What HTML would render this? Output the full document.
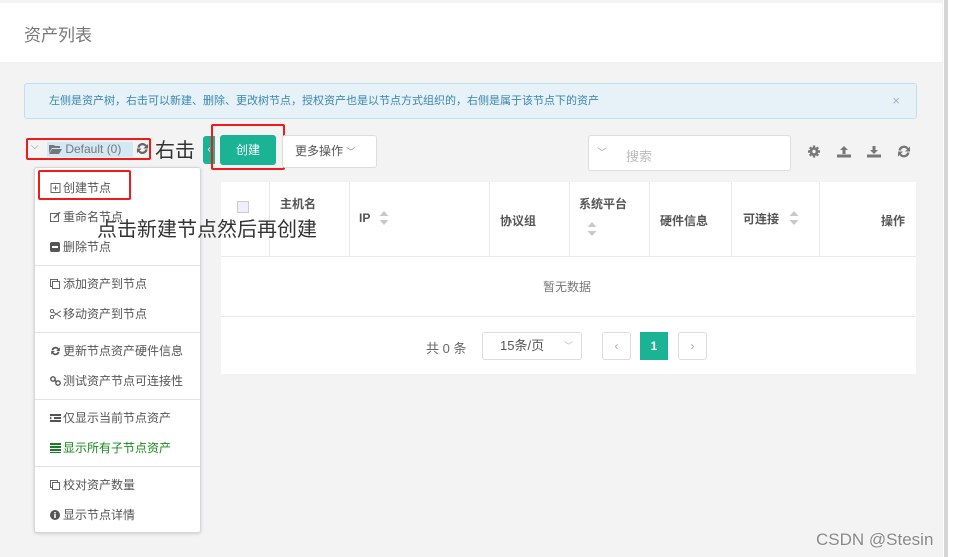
<!DOCTYPE html>
<html><head><meta charset="utf-8"><style>
*{box-sizing:border-box;margin:0;padding:0}
body{width:957px;height:557px;overflow:hidden;background:#f3f3f4;font-family:"Liberation Sans","Noto Sans CJK SC",sans-serif;position:relative;color:#676a6c;font-size:12px}
.a{position:absolute}
.sb{left:943px;top:0;width:14px;height:557px;background:#fff}
.sb:before{content:"";position:absolute;left:1px;top:0;width:4px;height:557px;background:#d6d6d6}
.hdr{left:0;top:3px;width:942px;height:59px;background:#fff}
.alert{left:24px;top:83px;width:893px;height:36px;background:#e6f1f8;border:1px solid #bfe1ec;border-radius:3px;color:#3a87ad;font-size:11px;line-height:34px;padding-left:24px}
.red{border:2px solid #f01a1a;border-radius:2px}
.btn{background:#fff;border:1px solid #ddd;border-radius:3px}
.menu{left:34px;top:167px;width:167px;height:366px;background:#fff;border:1px solid #d5d7db;border-radius:3px;box-shadow:0 1px 3px rgba(0,0,0,.15)}
.mi{position:absolute;left:15px;font-size:12px;color:#555}
.sep{position:absolute;left:0;width:165px;height:1px;background:#e2e3e6}
.ic{display:inline-block;width:11px;height:10px;margin-right:2px;vertical-align:-1px}
.srt{position:absolute}
</style></head><body>
<div class="a hdr"><div class="a" style="left:24px;top:18px;font-size:17px;color:#777">资产列表</div></div>
<div class="a sb"></div>
<div class="a alert">左侧是资产树，右击可以新建、删除、更改树节点，授权资产也是以节点方式组织的，右侧是属于该节点下的资产<span style="position:absolute;right:16px;color:#aac;font-size:13px">×</span></div>

<div class="a" style="left:31px;top:141px;font-size:10px;color:#888">⌵</div>
<div class="a" style="left:47px;top:142px;width:86px;height:15px;background:#d3e8f5"></div>
<div class="a" style="left:49px;top:142px;font-size:12px;color:#777"><svg width="13" height="10" viewBox="0 0 13 10" style="vertical-align:-1px"><path d="M0 1h5l1 1h5v2H3L0 9z M3 5h10l-3 5H0z" fill="#777"/></svg> Default (0)</div>
<svg class="a" style="left:136px;top:142px" width="13" height="13" viewBox="0 0 14 14"><g fill="#666"><path d="M1.5 6a5.5 5.5 0 0 1 10-2.5L13 2v5H8l2-2a3.3 3.3 0 0 0-6 1z M12.5 8a5.5 5.5 0 0 1-10 2.5L1 12V7h5l-2 2a3.3 3.3 0 0 0 6-1z"/></g></svg>
<div class="a red" style="left:26px;top:138px;width:125px;height:22px"></div>
<div class="a" style="left:155px;top:134px;font-size:20px;color:#333">右击</div>

<div class="a" style="left:203px;top:136px;width:12px;height:28px;background:#1ab394;border-radius:3px 0 0 3px;color:#fff;font-size:10px;line-height:28px;text-align:center">‹</div>
<div class="a" style="left:220px;top:135px;width:56px;height:30px;background:#1ab394;border-radius:3px;color:#fff;font-size:12px;line-height:30px;text-align:center">创建</div>
<div class="a red" style="left:211px;top:124px;width:74px;height:46px"></div>
<div class="a btn" style="left:282px;top:135px;width:95px;height:33px;line-height:31px;padding-left:12px;font-size:12px;color:#555">更多操作 <span style="color:#888;font-size:9px">﹀</span></div>

<div class="a btn" style="left:588px;top:135px;width:203px;height:36px"><span class="a" style="left:8px;top:8px;color:#999;font-size:10px">﹀</span><span class="a" style="left:37px;top:10px;color:#bbb;font-size:13px">搜索</span></div>
<svg class="a" style="left:808px;top:144px" width="105" height="15" viewBox="0 0 105 15">
<g fill="#777">
<circle cx="6" cy="7.5" r="4.3"/>
<g stroke="#777" stroke-width="2.4"><path d="M6 1.5v12M0 7.5h12M1.8 3.3l8.4 8.4M10.2 3.3l-8.4 8.4"/></g>
<circle cx="6" cy="7.5" r="1.7" fill="#f3f3f4"/>
<path d="M36 2l4 4h-2.5v4h-3V6H32z M29 10.5h14v3H29z"/>
<path d="M64.5 2h3v4H70l-4 4-4-4h2.5z M59 10.5h14v3H59z"/>
<path d="M90.5 6.5a5.5 5.5 0 0 1 10-2.5L102 2.5v5h-5l2-2a3.3 3.3 0 0 0-6 1z M101.5 8.5a5.5 5.5 0 0 1-10 2.5L90 12.5v-5h5l-2 2a3.3 3.3 0 0 0 6-1z"/></g></svg>

<div class="a" style="left:221px;top:182px;width:695px;height:192px;background:#fff"></div>
<div class="a" style="left:221px;top:256px;width:695px;height:1px;background:#e7eaec"></div>
<div class="a" style="left:221px;top:316px;width:695px;height:1px;background:#e7eaec"></div>
<div class="a" style="left:269px;top:182px;width:1px;height:74px;background:#e7eaec"></div>
<div class="a" style="left:349px;top:182px;width:1px;height:74px;background:#e7eaec"></div>
<div class="a" style="left:489px;top:182px;width:1px;height:74px;background:#e7eaec"></div>
<div class="a" style="left:569px;top:182px;width:1px;height:74px;background:#e7eaec"></div>
<div class="a" style="left:649px;top:182px;width:1px;height:74px;background:#e7eaec"></div>
<div class="a" style="left:731px;top:182px;width:1px;height:74px;background:#e7eaec"></div>
<div class="a" style="left:819px;top:182px;width:1px;height:74px;background:#e7eaec"></div>
<div class="a" style="left:237px;top:201px;width:12px;height:12px;border:1px solid #ccc;background:#eef"></div>
<div class="a" style="left:280px;top:195px;font-weight:bold;color:#555">主机名</div>
<div class="a" style="left:359px;top:211px;font-weight:bold;color:#555">IP</div>
<svg class="srt" style="left:379px;top:211px" width="10" height="14" viewBox="0 0 10 14"><path d="M5 0l4.5 5h-9zM5 14l4.5-5h-9z" fill="#c8c8c8"/></svg>
<div class="a" style="left:500px;top:212px;font-weight:bold;color:#555">协议组</div>
<div class="a" style="left:579px;top:195px;font-weight:bold;color:#555">系统平台</div>
<svg class="srt" style="left:587px;top:222px" width="10" height="14" viewBox="0 0 10 14"><path d="M5 0l4.5 5h-9zM5 14l4.5-5h-9z" fill="#c8c8c8"/></svg>
<div class="a" style="left:660px;top:212px;font-weight:bold;color:#555">硬件信息</div>
<div class="a" style="left:743px;top:210px;font-weight:bold;color:#555">可连接</div>
<svg class="srt" style="left:789px;top:211px" width="10" height="14" viewBox="0 0 10 14"><path d="M5 0l4.5 5h-9zM5 14l4.5-5h-9z" fill="#c8c8c8"/></svg>
<div class="a" style="left:881px;top:212px;font-weight:bold;color:#555">操作</div>
<div class="a" style="left:543px;top:278px;color:#777">暂无数据</div>
<div class="a" style="left:426px;top:338px;color:#666;font-size:13px">共 0 条</div>
<div class="a btn" style="left:482px;top:332px;width:100px;height:28px;line-height:26px;padding-left:17px;color:#555;font-size:13px">15条/页<span style="position:absolute;right:8px;color:#bbb;font-size:9px">﹀</span></div>
<div class="a btn" style="left:602px;top:332px;width:29px;height:28px;text-align:center;line-height:26px;color:#aaa">‹</div>
<div class="a" style="left:640px;top:332px;width:28px;height:28px;background:#1ab394;color:#fff;text-align:center;line-height:28px;font-weight:bold">1</div>
<div class="a btn" style="left:678px;top:332px;width:29px;height:28px;text-align:center;line-height:26px;color:#aaa">›</div>

<div class="a menu">
<div class="mi" style="top:11px"><svg class="ic" viewBox="0 0 11 10"><rect x="1" y="0.5" width="9" height="9" fill="none" stroke="#666"/><path d="M5.5 2.5v5M3 5h5" stroke="#666"/></svg>创建节点</div>
<div class="mi" style="top:40px"><svg class="ic" viewBox="0 0 11 10"><rect x="0.5" y="1.5" width="8" height="8" fill="none" stroke="#666"/><path d="M4 6l6-6" stroke="#666" stroke-width="1.5"/></svg>重命名节点</div>
<div class="mi" style="top:70px"><svg class="ic" viewBox="0 0 11 10"><rect x="0" y="0" width="10" height="10" rx="2" fill="#555"/><rect x="2" y="4" width="6" height="2" fill="#fff"/></svg>删除节点</div>
<div class="sep" style="top:97px"></div>
<div class="mi" style="top:107px"><svg class="ic" viewBox="0 0 11 10"><rect x="0.5" y="0.5" width="7" height="7" fill="none" stroke="#666"/><rect x="2.5" y="2.5" width="7" height="7" fill="#fff" stroke="#666"/></svg>添加资产到节点</div>
<div class="mi" style="top:137px"><svg class="ic" viewBox="0 0 11 10"><circle cx="2" cy="2" r="1.6" fill="none" stroke="#666"/><circle cx="2" cy="8" r="1.6" fill="none" stroke="#666"/><path d="M3.3 3l7.5 5M3.3 7l7.5-5" stroke="#666"/></svg>移动资产到节点</div>
<div class="sep" style="top:164px"></div>
<div class="mi" style="top:174px"><svg class="ic" viewBox="0 0 14 14"><path d="M1.5 6a5.5 5.5 0 0 1 10-2.5L13 2v5H8l2-2a3.3 3.3 0 0 0-6 1z M12.5 8a5.5 5.5 0 0 1-10 2.5L1 12V7h5l-2 2a3.3 3.3 0 0 0 6-1z" fill="#555"/></svg>更新节点资产硬件信息</div>
<div class="mi" style="top:204px"><svg class="ic" viewBox="0 0 11 10"><circle cx="3" cy="3" r="2.2" fill="none" stroke="#555" stroke-width="1.4"/><circle cx="8" cy="7" r="2.2" fill="none" stroke="#555" stroke-width="1.4"/><path d="M4 4l3 2" stroke="#555" stroke-width="1.4"/></svg>测试资产节点可连接性</div>
<div class="sep" style="top:231px"></div>
<div class="mi" style="top:241px"><svg class="ic" viewBox="0 0 11 10"><path d="M0 1h11v2H0zM4 4h7v2H4zM0 7h11v2H0zM0 3.5l2 1.5-2 1.5z" fill="#555"/></svg>仅显示当前节点资产</div>
<div class="mi" style="top:271px;color:#1a8a1a"><svg class="ic" viewBox="0 0 11 10"><path d="M0 0h11v2H0zM0 3h11v2H0zM0 6h11v2H0zM0 9h11v1H0z" fill="#1a7a2a"/></svg>显示所有子节点资产</div>
<div class="sep" style="top:298px"></div>
<div class="mi" style="top:308px"><svg class="ic" viewBox="0 0 11 10"><rect x="0.5" y="0.5" width="7" height="7" fill="none" stroke="#666"/><rect x="2.5" y="2.5" width="7" height="7" fill="#fff" stroke="#666"/></svg>校对资产数量</div>
<div class="mi" style="top:338px"><svg class="ic" viewBox="0 0 11 10"><circle cx="5" cy="5" r="5" fill="#555"/><rect x="4.2" y="4" width="1.6" height="4" fill="#fff"/><rect x="4.2" y="2" width="1.6" height="1.4" fill="#fff"/></svg>显示节点详情</div>
</div>
<div class="a red" style="left:38px;top:170px;width:93px;height:30px"></div>
<div class="a" style="left:97px;top:213px;font-size:20px;color:#333">点击新建节点然后再创建</div>

<div class="a" style="left:816px;top:530px;font-size:17px;color:#888;text-shadow:0 0 2px #fff,0 0 1px #fff">CSDN @Stesin</div>
</body></html>
